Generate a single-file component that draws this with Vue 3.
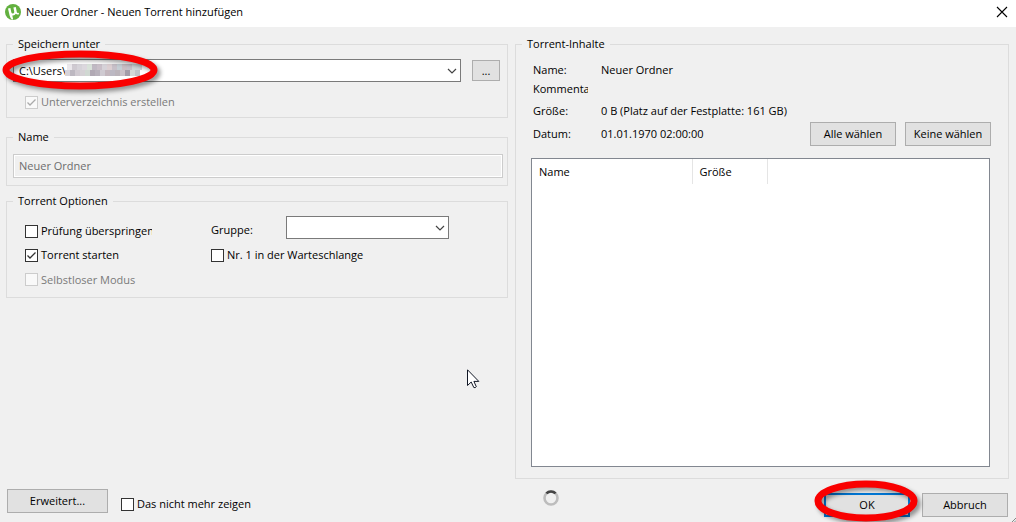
<script setup>
import { ref } from 'vue'

const path = ref('C:\\Users\\')
const name = ref('Neuer Ordner')
const group = ref('')
const subdir = ref(true)
const skipCheck = ref(false)
const start = ref(true)
const selfless = ref(false)
const first = ref(false)
const hide = ref(false)

const palette = ['#ebe8ec', '#cfcad1', '#d6d3d9', '#dcd8de', '#d9e2da', '#c0b9c3', '#c9bfc8', '#d6d2d8', '#dccfd2', '#c7c0c8', '#c5ced4', '#c9bdc3', '#c6c0c9', '#d0d8da', '#d2d8dc',
  '#d6d3d9', '#bdb8c1', '#d0cad1', '#d5d1d5', '#d0d8d2', '#b1a9b4', '#b8b1bb', '#cfcad1', '#c4b7be', '#bcb8c3', '#bbb4bb', '#c9c1c8', '#a39da9', '#d3d7d8', '#bfc4cb']
const tiles = palette.map((fill, i) => ({ fill, x: (i % 15) * 5 + (i < 15 ? 2 : 0), y: i < 15 ? 0 : 6 }))
</script>

<template>
  <div class="dialog">
    <header class="titlebar">
      <svg class="logo" width="16" height="16" viewBox="0 0 16 16" aria-hidden="true">
        <circle cx="8" cy="8" r="8" fill="#62b03f" />
        <path d="M3 4.4 5.4 4 6.3 8.3Q6.8 9.9 8.2 9.5Q9.6 9.1 9.2 7.3L8.4 3.4 10.8 3 11.8 7.9Q12.1 9.3 13.8 8.8L14 10.3Q11.8 11.1 10.8 9.8Q9.8 11.8 7.3 11.5L8.2 15.6 6.8 15.6Q5.2 13.8 4.6 11.5Z" fill="#fff" />
      </svg>
      <h1>Neuer Ordner - Neuen Torrent hinzufügen</h1>
      <button class="close" type="button" aria-label="Schließen">
        <svg width="12" height="12" viewBox="0 0 12 12"><path d="M1 1 11 11M11 1 1 11" stroke="#000" stroke-width="1.1" /></svg>
      </button>
    </header>

    <main class="columns">
      <div class="left">
        <fieldset class="save">
          <legend>Speichern unter</legend>
          <div class="path-row">
            <div class="combo">
              <select v-model="path" aria-label="Speichern unter">
                <option>C:\Users\</option>
              </select>
              <svg class="chevron" width="10" height="7" viewBox="0 0 10 7"><path d="M1 1 5 5 9 1" fill="none" stroke="#444" stroke-width="1.2" /></svg>
              <svg class="mosaic" width="80" height="12" viewBox="0 0 80 12" aria-hidden="true">
                <rect v-for="(t, i) in tiles" :key="i" :x="t.x" :y="t.y" width="5" height="6" :fill="t.fill" />
              </svg>
              <svg class="mark mark-path" width="170" height="54" viewBox="0 0 170 54" aria-hidden="true">
                <ellipse cx="81" cy="24" rx="74" ry="16" fill="none" stroke="#f90000" stroke-width="7" />
              </svg>
            </div>
            <button class="btn browse" type="button">...</button>
          </div>
          <label class="check off">
            <span class="box"><input v-model="subdir" type="checkbox" disabled /><svg v-if="subdir" viewBox="0 0 13 13"><path d="M2.5 6.5 5 9 10.5 3.5" /></svg></span>
            <span>Unterverzeichnis erstellen</span>
          </label>
        </fieldset>

        <fieldset class="naming">
          <legend>Name</legend>
          <input v-model="name" class="name" type="text" aria-label="Name" disabled />
        </fieldset>

        <fieldset class="options">
          <legend>Torrent Optionen</legend>
          <div class="option-grid">
            <label class="check skip">
              <span class="box"><input v-model="skipCheck" type="checkbox" /><svg v-if="skipCheck" viewBox="0 0 13 13"><path d="M2.5 6.5 5 9 10.5 3.5" /></svg></span>
              <span class="clip">Prüfung überspringen</span>
            </label>
            <div class="group-row">
              <label for="group">Gruppe:</label>
              <div class="combo">
                <select id="group" v-model="group"><option value=""></option></select>
                <svg class="chevron" width="10" height="7" viewBox="0 0 10 7"><path d="M1 1 5 5 9 1" fill="none" stroke="#444" stroke-width="1.2" /></svg>
              </div>
            </div>
            <label class="check">
              <span class="box"><input v-model="start" type="checkbox" /><svg v-if="start" viewBox="0 0 13 13"><path d="M2.5 6.5 5 9 10.5 3.5" /></svg></span>
              <span>Torrent starten</span>
            </label>
            <label class="check">
              <span class="box"><input v-model="first" type="checkbox" /><svg v-if="first" viewBox="0 0 13 13"><path d="M2.5 6.5 5 9 10.5 3.5" /></svg></span>
              <span>Nr. 1 in der Warteschlange</span>
            </label>
            <label class="check off">
              <span class="box"><input v-model="selfless" type="checkbox" disabled /></span>
              <span>Selbstloser Modus</span>
            </label>
          </div>
        </fieldset>
      </div>

      <fieldset class="contents">
        <legend>Torrent-Inhalte</legend>
        <div class="inner">
          <div class="facts">
            <dl>
              <dt>Name:</dt><dd>Neuer Ordner</dd>
              <dt>Kommentar:</dt><dd></dd>
              <dt>Größe:</dt><dd>0 B (Platz auf der Festplatte: 161 GB)</dd>
              <dt>Datum:</dt><dd>01.01.1970 02:00:00</dd>
            </dl>
            <div class="pick">
              <button class="btn" type="button">Alle wählen</button>
              <button class="btn" type="button">Keine wählen</button>
            </div>
          </div>
          <div class="list">
            <table>
              <thead><tr><th class="col-name">Name</th><th class="col-size">Größe</th></tr></thead>
              <tbody></tbody>
            </table>
          </div>
        </div>
      </fieldset>
    </main>

    <footer>
      <div class="foot-left">
        <button class="btn more" type="button">Erweitert...</button>
        <label class="check">
          <span class="box"><input v-model="hide" type="checkbox" /><svg v-if="hide" viewBox="0 0 13 13"><path d="M2.5 6.5 5 9 10.5 3.5" /></svg></span>
          <span>Das nicht mehr zeigen</span>
        </label>
      </div>
      <div class="foot-right">
        <svg class="spinner" width="16" height="16" viewBox="0 0 16 16" aria-hidden="true">
          <circle cx="8" cy="8" r="6.5" fill="none" stroke="#bdbdbd" stroke-width="2.6" />
          <path d="M3.4 3.4A6.5 6.5 0 0 1 12.6 3.4" fill="none" stroke="#444" stroke-width="2.6" />
        </svg>
        <div class="actions">
          <div class="ok-wrap">
            <button class="btn primary" type="button">OK</button>
            <svg class="mark mark-ok" width="112" height="54" viewBox="0 0 112 54" aria-hidden="true">
              <ellipse cx="55" cy="24" rx="48" ry="17" fill="none" stroke="#f90000" stroke-width="7" />
            </svg>
          </div>
          <button class="btn" type="button">Abbruch</button>
        </div>
      </div>
    </footer>

    <svg class="grip" width="4" height="4" viewBox="0 0 4 4" aria-hidden="true"><path d="M0 4 4 0M2.5 4 4 2.5" stroke="#888" /></svg>
    <svg class="cursor" width="13" height="20" viewBox="0 0 13 20" aria-hidden="true">
      <path d="M.5 .8V16.5L4.2 13 6.8 18.5Q8.3 19.2 9.3 17.7L6.9 12.4H11.8Z" fill="#fff" stroke="#111725" />
    </svg>
  </div>
</template>

<style>
body { background: #f0f0f0; }
</style>

<style scoped>
.dialog {
  position: relative;
  box-sizing: border-box;
  min-height: 100vh;
  display: flex;
  flex-direction: column;
  overflow: hidden;
  background: #f0f0f0;
  color: #000;
  font: 11px/16px "Segoe UI", "Open Sans", sans-serif;
}
.dialog *, .dialog *::before { box-sizing: border-box; }
button, input, select { font: inherit; color: inherit; margin: 0; }
.titlebar { display: flex; align-items: center; height: 27px; padding: 0 8px 4px 5px; background: #fff; }
h1 { flex: 1; margin: 0 0 0 5px; font-size: 11px; line-height: 16px; font-weight: 400; }
.close { display: flex; padding: 0; border: 0; background: none; }
.columns { flex: 1; display: grid; grid-template-columns: 502fr 494fr; gap: 7px; padding: 9px 7px 0 6px; }
.left { min-width: 0; }
fieldset { min-width: 0; margin: 0; padding: 0 6px; border: 1px solid #dcdcdc; }
legend { padding: 0 5px; line-height: 16px; }
.save { padding-bottom: 7px; }
.path-row { display: flex; align-items: center; gap: 11px; padding: 7px 1px 0 0; }
.combo { position: relative; flex: 1; }
select {
  display: block;
  width: 100%;
  height: 23px;
  padding: 0 20px 0 5px;
  appearance: none;
  border: 1px solid #7a7a7a;
  border-radius: 0;
  background: #fff;
}
.chevron { position: absolute; right: 4px; top: 9px; }
.mosaic { position: absolute; left: 52px; top: 5px; }
.mark { position: absolute; filter: drop-shadow(3px 3px 2px rgba(0, 0, 0, 0.4)); pointer-events: none; }
.mark-path { left: -14px; top: -13px; }
.mark-ok { left: -13px; top: -16px; }
.btn { height: 24px; width: 86px; padding: 0; border: 1px solid #adadad; background: #e1e1e1; text-align: center; }
.browse { width: 28px; height: 21px; }
.check { display: flex; align-items: center; gap: 3px; white-space: nowrap; }
.off { color: #7a7a7a; }
.box { position: relative; display: flex; }
.box input { width: 13px; height: 13px; appearance: none; border: 1px solid #333; background: #fff; }
.box input:disabled { border-color: #ccc; background: #f9f9f9; }
.box svg { position: absolute; inset: 0; fill: none; stroke: #333; stroke-width: 1.3; }
.off .box svg { stroke: #aaa; }
.save .check { margin: 12px 0 0 12px; }
.naming { margin-top: 11px; padding-bottom: 7px; }
.name {
  display: block;
  width: 100%;
  height: 24px;
  margin-top: 9px;
  padding: 0 5px 2px;
  border: 1px solid #ccc;
  background: #f0f0f0;
  box-shadow: inset 0 0 0 1px #fff;
  color: #6d6d6d;
}
.naming { padding-right: 4px; }
.options { margin-top: 7px; padding-bottom: 5px; }
.option-grid { display: grid; grid-template-columns: 186px 1fr; grid-template-rows: 31px 24px 25px; align-items: center; padding: 3px 0 0 12px; }
.option-grid .check { height: 24px; }
.option-grid .skip { align-self: end; width: 127px; }
.clip { overflow: hidden; }
.group-row { display: flex; align-items: center; }
.group-row label { width: 75px; padding-top: 4px; }
.group-row .combo { flex: 0 0 163px; }
.contents { display: flex; flex-direction: column; padding-bottom: 11px; }
.inner { flex: 1; display: flex; flex-direction: column; margin: 0 12px 0 9px; }
.facts { display: flex; justify-content: space-between; align-items: flex-end; margin-right: -1px; padding-top: 8px; }
dl { display: grid; grid-template: 19px 20px 23px 24px / 55px auto; column-gap: 13px; align-items: center; margin: 0 0 0 2px; white-space: nowrap; }
dt { overflow: hidden; }
dd { margin: 0; }
.pick { display: flex; gap: 9px; }
.list { flex: 1; margin-top: 12px; border: 1px solid #828790; background: #fff; }
table { border-collapse: collapse; }
th { height: 25px; padding: 0 0 0 7px; border-right: 1px solid #e5e5e5; text-align: left; font-weight: 400; }
.col-name { width: 160px; }
.col-size { width: 75px; }
footer { display: grid; grid-template-columns: 502fr 494fr; gap: 7px; padding: 10px 8px 5px 7px; }
.foot-left { display: flex; align-items: flex-start; gap: 13px; }
.more { width: 101px; }
.foot-left .check { padding-top: 7px; }
.foot-right { display: flex; justify-content: space-between; align-items: flex-start; padding-left: 28px; }
.actions { display: flex; gap: 12px; padding-top: 4px; }
.ok-wrap { position: relative; }
.primary { display: block; border: 2px solid #0078d7; }
.spinner { margin-top: 1px; }
.grip { position: absolute; right: 0; bottom: 0; }
.cursor { position: absolute; left: 467px; top: 369px; }
</style>
